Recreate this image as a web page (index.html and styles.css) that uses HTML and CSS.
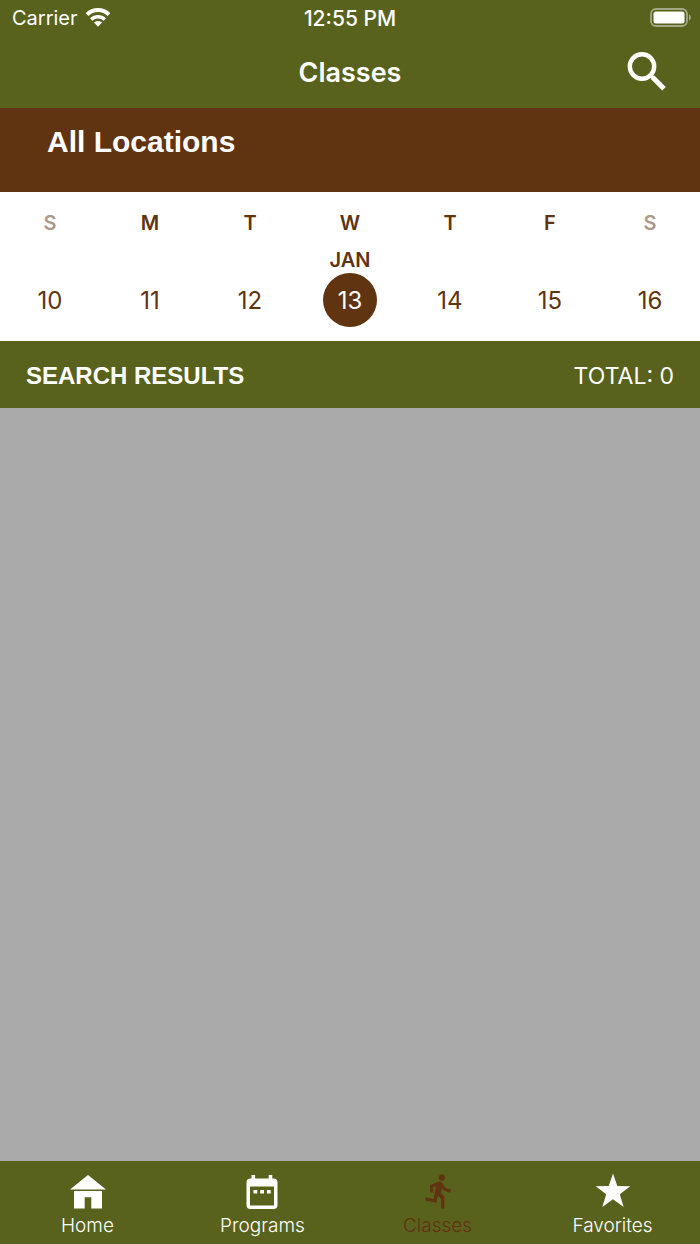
FILE: index.html
```html
<!DOCTYPE html>
<html lang="en">
<head>
  <meta charset="UTF-8" />
  <meta name="viewport" content="width=device-width, initial-scale=1" />
  <title>Classes</title>
  <link rel="stylesheet" href="styles.css">
</head>
<body>
  <header class="header">
    <div class="status-bar">
      <div class="carrier">
        <span>Carrier</span>
        <svg width="26" height="20" viewBox="0 1 26 20" fill="none" stroke="white" stroke-width="4">
          <path d="M2 7.6C8.2 1.6 17.8 1.6 24 7.6" />
          <path d="M6.2 12.4C10 8.800 16 8.800 19.800 12.400" stroke-width="3.400" />
          <path d="M13 19.800l-4-4.200c2.300-2 5.700-2 8 0z" fill="white" stroke="none" />
        </svg>
      </div>
      <span class="time">12:55 PM</span>
      <svg class="battery" width="42" height="20" viewBox="0 0 42 20">
        <rect x="1" y="1" width="36" height="17" rx="5" fill="none" stroke="#a3a886" stroke-width="1.800" />
        <rect x="3.500" y="3.500" width="31" height="12" rx="2.500" fill="white" />
        <path d="M39 6.500c2.400 1 2.400 5 0 6z" fill="#a3a886" />
      </svg>
    </div>

    <div class="nav-bar">
      <h1>Classes</h1>
      <button class="search-btn" aria-label="Search">
        <svg width="40" height="40" viewBox="0 0 40 40" fill="none" stroke="white">
          <circle cx="15" cy="14.500" r="12.200" stroke-width="4.400" />
          <path d="M23.600 23.300l2.500 2.500" stroke-width="3.400" />
          <path d="M25.600 25.300l11.400 11.400" stroke-width="5" />
        </svg>
      </button>
    </div>
  </header>

  <button class="location">All Locations</button>

  <!-- Week picker -->
  <section class="week">
    <div class="weekdays">
      <span class="weekend">S</span>
      <span>M</span>
      <span>T</span>
      <span>W</span>
      <span>T</span>
      <span>F</span>
      <span class="weekend">S</span>
    </div>
    <div class="month">JAN</div>
    <div class="dates">
      <button>10</button>
      <button>11</button>
      <button>12</button>
      <button class="selected">13</button>
      <button>14</button>
      <button>15</button>
      <button>16</button>
    </div>
  </section>

  <div class="results-bar">
    <h2>SEARCH RESULTS</h2>
    <span class="total">TOTAL: 0</span>
  </div>

  <main class="results"></main>

  <nav class="tab-bar">
    <a href="#home">
      <svg width="38" height="38" viewBox="0 0 38 38" fill="white">
        <path d="M19 3L37 17.600H1z" />
        <path d="M5 19h28v17.500H22.300V25.200h-6.600v11.300H5z" />
      </svg>
      <span>Home</span>
    </a>
    <a href="#programs">
      <svg width="38" height="38" viewBox="1 0 38 38" fill="white">
        <path fill-rule="evenodd" d="M8.500 3h3.600v3.500h13.600V3h3.600v3.500h1.200a4 4 0 0 1 4 4V33a4 4 0 0 1-4 4h-23a4 4 0 0 1-4-4V10.500a4 4 0 0 1 4-4h1zM7 14.600v18.800h24V14.600z" />
        <path d="M10.500 18h3.800v3.600h-3.800zM17.200 18H21v3.600h-3.800zM23.900 18h3.800v3.600h-3.800z" />
      </svg>
      <span>Programs</span>
    </a>
    <a href="#classes" class="active">
      <svg width="38" height="38" viewBox="-1 0 24 24" fill="currentColor">
        <path d="M13.490 5.480c1.100 0 2-.9 2-2s-.9-2-2-2-2 .9-2 2 .9 2 2 2zm-3.600 13.900l1-4.400 2.100 2v6h2v-7.500l-2.100-2 .6-3c1.300 1.500 3.300 2.500 5.500 2.500v-2c-1.900 0-3.500-1-4.300-2.400l-1-1.600c-.4-.6-1-1-1.700-1-.3 0-.5.1-.8.1l-5.200 2.200v4.700h2v-3.400l1.800-.7-1.600 8.100-4.900-1-.4 2 7 1.400z" />
      </svg>
      <span>Classes</span>
    </a>
    <a href="#favorites">
      <svg width="38" height="38" viewBox="0 0 38 38" fill="white">
        <path d="M19 1.500l4.300 12.600 13 .1-10.500 8 3.900 12.800L19 27.300 8.300 35l3.900-12.800-10.500-8 13-.1z" />
      </svg>
      <span>Favorites</span>
    </a>
  </nav>
</body>
</html>
```
FILE: styles.css
```css
:root {
  --green: #58621c;
  --brown: #603311;
  --gray: #aaaaaa;
}

* {
  box-sizing: border-box;
}

body {
  margin: 0;
  min-height: 100vh;
  display: flex;
  flex-direction: column;
  font-family: Inter, Roboto, sans-serif;
  background-color: var(--gray);
  color: white;
}

button {
  padding: 0;
  border: none;
  background: none;
  color: inherit;
  font: inherit;
  cursor: pointer;
}

h1,
h2 {
  margin: 0;
}

.header {
  background-color: var(--green);
}

.status-bar {
  display: grid;
  grid-template-columns: 1fr auto 1fr;
  align-items: center;
  height: 36px;
  padding: 0 8px;
  font-size: 20px;
}

.carrier {
  display: flex;
  align-items: center;
  gap: 7px;
  padding-left: 4px;
}

.time {
  font-size: 21px;
  font-weight: 500;
}

.battery {
  justify-self: end;
}

.nav-bar {
  display: grid;
  grid-template-columns: 1fr auto 1fr;
  align-items: center;
  height: 72px;
  padding: 0 33px;
}

.nav-bar h1 {
  grid-column: 2;
  font-size: 27px;
  font-weight: 600;
}

.search-btn {
  justify-self: end;
  height: 40px;
}

.location {
  height: 84px;
  padding: 0 47px 17px;
  background-color: var(--brown);
  font-family: "Liberation Sans", Arial, sans-serif;
  font-size: 30px;
  font-weight: bold;
  text-align: left;
}

.week {
  padding: 19px 0 14px;
  background-color: white;
  color: var(--brown);
  text-align: center;
}

.weekdays,
.dates {
  display: grid;
  grid-template-columns: repeat(7, 1fr);
  justify-items: center;
}

.weekdays,
.month {
  font-size: 20px;
  font-weight: 600;
  line-height: 24px;
}

.weekdays {
  margin-bottom: 13px;
}

.weekend {
  opacity: 0.5;
}

.dates button {
  width: 54px;
  height: 54px;
  border-radius: 50%;
  font-size: 24px;
}

.month {
  margin-bottom: 1px;
}

.dates .selected {
  background-color: var(--brown);
  color: white;
}

.results-bar {
  display: flex;
  align-items: center;
  justify-content: space-between;
  height: 67px;
  padding: 2px 26px 0;
  background-color: var(--green);
}

.results-bar h2 {
  font-family: "Liberation Sans", Arial, sans-serif;
  font-size: 24px;
}

.total {
  font-size: 23px;
}

.results {
  flex: 1;
}

.tab-bar {
  display: grid;
  grid-template-columns: repeat(4, 1fr);
  height: 83px;
  padding-top: 11px;
  background-color: var(--green);
}

.tab-bar a {
  display: flex;
  flex-direction: column;
  align-items: center;
  gap: 4px;
  color: white;
  font-size: 19px;
  font-weight: 300;
  line-height: 24px;
  text-decoration: none;
}

.tab-bar .active {
  color: var(--brown);
}
```
